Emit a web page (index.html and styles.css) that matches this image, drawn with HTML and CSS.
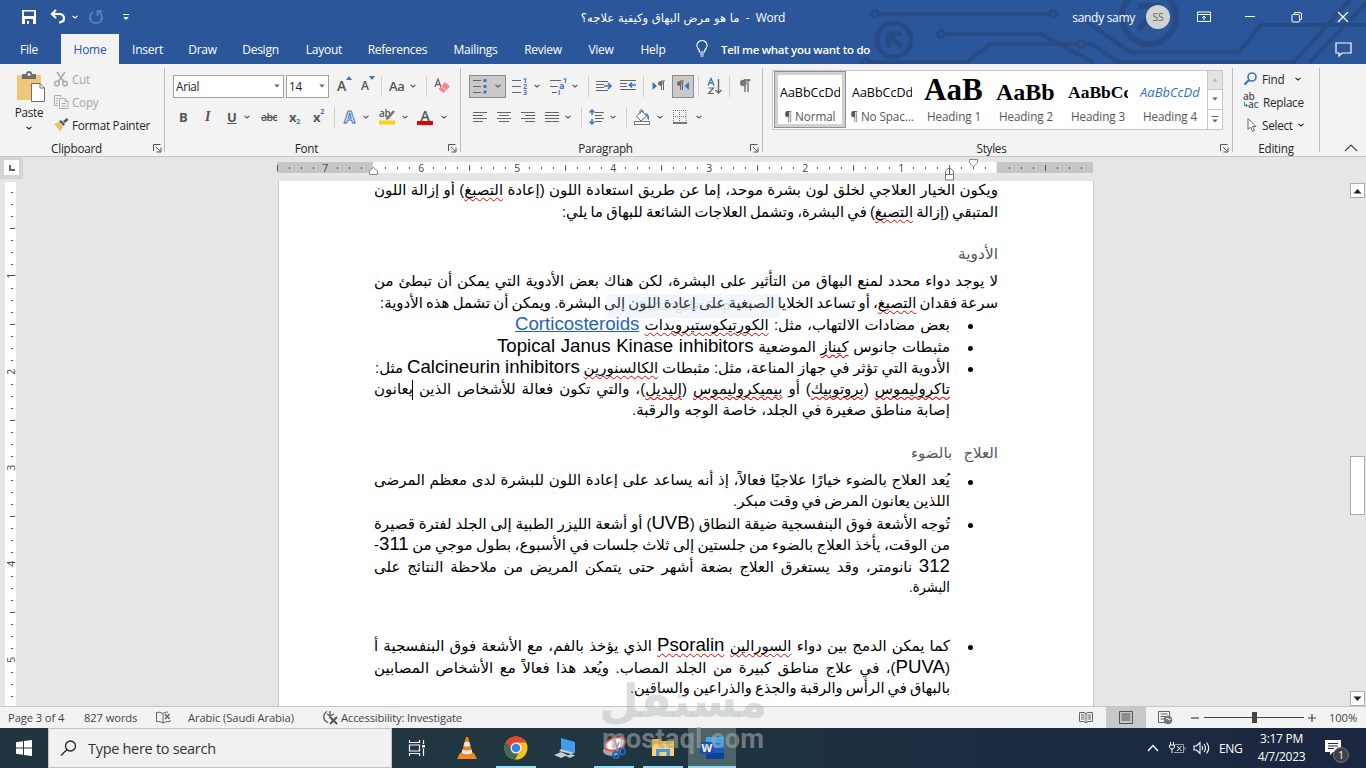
FILE: index.html
```html
<!DOCTYPE html>
<html lang="en">
<head>
    <meta charset="UTF-8">
    <meta name="viewport" content="width=device-width, initial-scale=1.0">
    <title>ما هو مرض البهاق وكيفية علاجه؟ - Word</title>
    <link rel="stylesheet" href="styles.css">
</head>
<body>
    <svg class="defs" width="0" height="0">
        <symbol id="chev" viewBox="0 0 8 8"><path d="M1.5 2.8 L4 5 L6.5 2.8" fill="none" stroke="currentColor" stroke-width="1.1"/></symbol>
        <symbol id="launch" viewBox="0 0 9 9"><path d="M0.5 7 V0.5 H7.5 M3 3 L7 7 M8 3.5 V8 H3.5" fill="none" stroke="#555"/></symbol>
        <symbol id="tri" viewBox="0 0 8 8"><path d="M1.2 2.5 H6.8 L4 5.5 Z" fill="#666"/></symbol>
    </svg>

    <header class="top">
        <svg class="circuit" width="506" height="64" viewBox="860 0 506 64" fill="none" stroke="#274b85" stroke-width="4">
            <circle cx="875" cy="14" r="3.5" stroke-width="3"/>
            <path d="M879 14 H1049"/>
            <circle cx="1053" cy="14" r="3.5" stroke-width="3"/>
            <circle cx="894" cy="40" r="17" stroke-width="5"/>
            <path d="M888 48 V34 H902 M889 35 L901 47" stroke-width="5"/>
            <circle cx="865" cy="62" r="3.5" stroke-width="3"/>
            <path d="M869 62 H968 L990 44 H1077"/>
            <circle cx="1081" cy="44" r="3.5" stroke-width="3"/>
            <path d="M1085 44 H1092 L1118 62 H1294 L1350 0"/>
            <circle cx="941" cy="34" r="3.5" stroke-width="3"/>
            <path d="M945 34 H1041 L1094 63"/>
            <path d="M1084 20 L1130 52 H1239 L1261 25 H1366"/>
            <circle cx="1149" cy="17" r="27" stroke-width="6"/>
            <path d="M1138 29 L1156 11 M1138 6 H1160 V28" stroke-width="6"/>
            <path d="M1309 63 L1366 3"/>
        </svg>
        <div class="titlebar">
            <div class="quick">
                <svg width="16" height="16" viewBox="0 0 16 16"><path d="M1 1 H15 V15 H1 Z M3 2.5 V7 H13 V2.5 Z M4 10 V15 H12 V10 Z" fill="#fff" fill-rule="evenodd"/><path d="M6 12 h2 v3 h-2z" fill="#fff"/></svg>
                <svg width="16" height="16" viewBox="0 0 16 16"><path d="M6 1 L2 5 L6 9 M2 5 H9 Q14 5 14 9.5 Q14 13 9 13.5" fill="none" stroke="#fff" stroke-width="2.2"/></svg>
                <svg class="light" width="8" height="8"><use href="#chev"/></svg>
                <svg width="16" height="16" viewBox="0 0 16 16"><path d="M5 3 A6 6 0 1 0 11 3 M9.5 7 V2 H14" fill="none" stroke="#6286bd" stroke-width="1.7"/></svg>
                <svg width="8" height="8" viewBox="0 0 8 8"><path d="M1 1.5 H7" stroke="#fff"/><path d="M1.2 4 H6.8 L4 7 Z" fill="#fff"/></svg>
            </div>
            <div class="doc-title"><bdi dir="rtl">ما هو مرض البهاق وكيفية علاجه؟</bdi>&nbsp; - &nbsp;Word</div>
            <div class="account">sandy samy <span class="avatar">SS</span></div>
            <div class="window-buttons">
                <svg width="14" height="12" viewBox="0 0 14 12" fill="none" stroke="#fff"><path d="M0.5 1 H13.5 V10.5 H0.5 Z M0.5 3.5 H13.5 M7 9.5 V5 M5 7 L7 5 L9 7"/></svg>
                <svg width="10" height="12" viewBox="0 0 10 12" stroke="#fff"><path d="M0 5.5 H10"/></svg>
                <svg width="12" height="12" viewBox="0 0 12 12" fill="none" stroke="#fff"><rect x="1" y="3.5" width="7.5" height="7.5" rx="1"/><path d="M3.5 3 V1.5 H9 Q10.5 1.5 10.5 3 V8.5 H9"/></svg>
                <svg width="12" height="12" viewBox="0 0 12 12" stroke="#fff" stroke-width="1.2"><path d="M1 1 L11 11 M11 1 L1 11"/></svg>
            </div>
        </div>
        <nav class="tabs">
            <a class="tab file">File</a>
            <a class="tab active">Home</a>
            <a class="tab insert">Insert</a>
            <a class="tab draw">Draw</a>
            <a class="tab design">Design</a>
            <a class="tab layout">Layout</a>
            <a class="tab references">References</a>
            <a class="tab mailings">Mailings</a>
            <a class="tab review">Review</a>
            <a class="tab view">View</a>
            <a class="tab help">Help</a>
            <svg class="bulb" width="14" height="18" viewBox="0 0 14 18" fill="none" stroke="#fff" stroke-width="1.2"><path d="M4.5 12 Q4.5 10 3 8.5 A5 5 0 1 1 11 8.5 Q9.5 10 9.5 12 Z M5 14 H9 M5.5 16 H8.5"/></svg>
            <span class="tell">Tell me what you want to do</span>
            <svg class="comment" width="17" height="15" viewBox="0 0 17 15" fill="none" stroke="#fff" stroke-width="1.2"><path d="M1 1 H16 V11 H7 L4 14 V11 H1 Z"/></svg>
        </nav>
    </header>

    <section class="ribbon">
        <div class="group clipboard">
            <div class="group-body">
                <div class="paste">
                    <svg width="30" height="32" viewBox="0 0 30 32"><rect x="1" y="4" width="24" height="25" fill="#efc778"/><path d="M6 3 H10 A3 3 0 0 1 16 3 H20 V8 H6 Z" fill="#6d6d70"/><circle cx="13" cy="3.5" r="1.5" fill="#f3f3f3"/><path d="M15.5 12.5 H24 L28.5 17 V30.5 H15.5 Z" fill="#fff" stroke="#6f6f6f"/><path d="M24 12.5 V17 H28.5" fill="none" stroke="#6f6f6f"/></svg>
                    <span>Paste</span>
                    <svg width="8" height="8"><use href="#chev"/></svg>
                </div>
                <div class="stack">
                    <div class="cmd off"><svg width="16" height="16" viewBox="0 0 16 16" fill="none" stroke="#a9a9a9" stroke-width="1.5"><path d="M4 1 L11 11 M12 1 L5 11"/><circle cx="4" cy="12.5" r="2.3"/><circle cx="12" cy="12.5" r="2.3"/></svg>Cut</div>
                    <div class="cmd off"><svg width="16" height="16" viewBox="0 0 16 16" fill="none" stroke="#adadad"><path d="M5 11.5 H1.5 V1.5 H8 V3 M3 4.5 H5 M3 7 H5 M3 9.5 H5"/><path d="M6.5 4.5 H12 L15 7.5 V14.5 H6.5 Z M12 4.5 V7.5 H15 M8.5 9.5 H13 M8.5 12 H13"/></svg>Copy</div>
                    <div class="cmd"><svg width="16" height="16" viewBox="0 0 16 16"><path d="M1 7 L6 5 L10 9.5 L7.5 14.5 Z" fill="#efc06c"/><path d="M6 4.5 L8 3 L12 7 L10.5 9 Z M10 4 L14 1 L15.5 3 L12 6 Z" fill="#5b5b5b"/></svg>Format Painter</div>
                </div>
            </div>
            <div class="group-label">Clipboard<svg width="9" height="9"><use href="#launch"/></svg></div>
        </div>

        <div class="group font">
            <div class="tools row1">
                <div class="select">Arial<svg width="8" height="8"><use href="#tri"/></svg></div>
                <div class="select">14<svg width="8" height="8"><use href="#tri"/></svg></div>
                <span class="glyph grow">A<svg width="6" height="4"><path d="M0 4 L3 0 L6 4Z" fill="#3b75bf"/></svg></span>
                <span class="glyph shrink">A<svg width="6" height="4"><path d="M0 0 H6 L3 4Z" fill="#3b75bf"/></svg></span>
                <i class="sep"></i>
                <span class="glyph case">Aa</span>
                <svg width="8" height="8"><use href="#chev"/></svg>
                <i class="sep"></i>
                <svg width="17" height="17" viewBox="0 0 17 17"><path d="M1 9 L4 1 L7 9 M2 6.5 H6" fill="none" stroke="#666" stroke-width="1.3"/><path d="M4.5 11 L11 4 L16 8.500 L9.500 15 Z" fill="#f2888d"/><path d="M7 8.5 L12 12.5" stroke="#f9d0d2"/></svg>
            </div>
            <div class="tools row2">
                <b class="glyph">B</b>
                <span class="glyph italic">I</span>
                <u class="glyph">U</u>
                <svg width="8" height="8"><use href="#chev"/></svg>
                <s class="glyph strike">abc</s>
                <span class="glyph bold">x<sub>2</sub></span>
                <span class="glyph bold">x<sup>2</sup></span>
                <i class="sep"></i>
                <span class="glyph outline">A</span>
                <svg width="8" height="8"><use href="#chev"/></svg>
                <svg width="17" height="16" viewBox="0 0 17 16"><text x="0" y="8" class="ab">ab</text><path d="M15 2 L9 9 L7 10" stroke="#777" stroke-width="2.5"/><rect x="0" y="11.5" width="16" height="4" fill="#fcd116"/></svg>
                <svg width="8" height="8"><use href="#chev"/></svg>
                <span class="glyph color">A</span>
                <svg width="8" height="8"><use href="#chev"/></svg>
            </div>
            <div class="group-label">Font<svg width="9" height="9"><use href="#launch"/></svg></div>
        </div>

        <div class="group paragraph">
            <div class="tools row1">
                <div class="pressed">
                    <svg width="16" height="16" viewBox="0 0 16 16"><path d="M0 2.5 H8 M0 8.5 H8 M0 14.5 H8" stroke="#666"/><g fill="#3b75bf"><circle cx="12" cy="2.5" r="1.7"/><circle cx="12" cy="8.5" r="1.7"/><circle cx="12" cy="14" r="1.7"/></g></svg>
                    <svg width="8" height="8"><use href="#chev"/></svg>
                </div>
                <svg width="16" height="17" viewBox="0 0 16 17"><path d="M0 2.5 H9 M0 8.5 H9 M0 14.5 H9" stroke="#666"/><g class="num"><text x="11" y="5">1</text><text x="11" y="11">2</text><text x="11" y="17">3</text></g></svg>
                <svg width="8" height="8"><use href="#chev"/></svg>
                <svg width="17" height="17" viewBox="0 0 17 17"><path d="M0 2.5 H11 M0 8.5 H8 M2 14.5 H7" stroke="#666"/><g class="num"><text x="13" y="5">1</text><text x="9" y="11" class="big">a</text><text x="8" y="17">i</text></g></svg>
                <svg width="8" height="8"><use href="#chev"/></svg>
                <i class="sep"></i>
                <svg width="16" height="14" viewBox="0 0 16 14"><path d="M0 2.5 H12 M0 5.5 H8 M0 8.5 H8 M0 11.5 H12" stroke="#666"/><path d="M8 7 H15 M12 4 L15 7 L12 10" fill="none" stroke="#3b75bf" stroke-width="1.7"/></svg>
                <svg width="16" height="14" viewBox="0 0 16 14"><path d="M0 1.5 H16 M0 4.5 H7 M0 7.5 H7 M0 10.5 H16" stroke="#666"/><path d="M9 6 H16 M12 3.5 L9.5 6 L12 8.5" fill="none" stroke="#3b75bf" stroke-width="1.7"/></svg>
                <i class="sep"></i>
                <svg width="14" height="12" viewBox="0 0 14 12"><path d="M0.5 2 V10 L5 6 Z" fill="#3b75bf"/><path d="M9 1 H13 M9.5 1 V10 M11.5 1 V10" stroke="#666"/><circle cx="8.3" cy="3.5" r="2.3" fill="#666"/></svg>
                <div class="pressed rtl-btn">
                    <svg width="14" height="12" viewBox="0 0 14 12"><path d="M13 2 V10 L8.5 6 Z" fill="#3b75bf"/><path d="M4 1 H8 M4.5 1 V10 M6.5 1 V10" stroke="#666"/><circle cx="3.3" cy="3.5" r="2.3" fill="#666"/></svg>
                </div>
                <i class="sep"></i>
                <svg width="16" height="17" viewBox="0 0 16 17"><path d="M1 7.5 L4 0.5 L7 7.5 M2 5 H6" fill="none" stroke="#3b75bf" stroke-width="1.3"/><path d="M1.5 10 H6.5 L1.5 15.5 H7" fill="none" stroke="#666" stroke-width="1.2"/><path d="M11.5 1 V15 M8.5 12 L11.5 15 L14.5 12" fill="none" stroke="#666" stroke-width="1.4"/></svg>
                <i class="sep"></i>
                <svg width="12" height="14" viewBox="0 0 12 14"><path d="M5 1 H11.5 M6 1 V13 M9 1 V13" stroke="#666" stroke-width="1.3"/><circle cx="4.3" cy="4" r="3.3" fill="#777"/></svg>
            </div>
            <div class="tools row2">
                <svg width="14" height="12" viewBox="0 0 14 12"><path d="M0 1.5 H14 M0 4.5 H10 M0 7.5 H14 M0 10.5 H10" stroke="#666"/></svg>
                <svg width="14" height="12" viewBox="0 0 14 12"><path d="M0 1.5 H14 M2 4.5 H12 M0 7.5 H14 M2 10.5 H12" stroke="#666"/></svg>
                <svg width="14" height="12" viewBox="0 0 14 12"><path d="M0 1.5 H14 M4 4.5 H14 M0 7.5 H14 M4 10.5 H14" stroke="#666"/></svg>
                <svg width="14" height="12" viewBox="0 0 14 12"><path d="M0 1.5 H14 M0 4.5 H14 M0 7.5 H14 M0 10.5 H14" stroke="#666"/></svg>
                <svg width="8" height="8"><use href="#chev"/></svg>
                <i class="sep"></i>
                <svg width="15" height="16" viewBox="0 0 15 16"><path d="M3 1 V6 M3 10 V15 M0.5 3.5 L3 1 L5.5 3.5 M0.5 12.5 L3 15 L5.5 12.5" fill="none" stroke="#3b75bf" stroke-width="1.5"/><path d="M6 3.5 H15 M6 6.5 H13 M6 9.5 H15 M6 12.5 H13" stroke="#666"/></svg>
                <svg width="8" height="8"><use href="#chev"/></svg>
                <i class="sep"></i>
                <svg width="17" height="17" viewBox="0 0 17 17"><path d="M2.5 7 L8 2 L12.5 7 L7 12 Z M6 5 V1.5 Q7.5 0 9 1.5 V4" fill="#fff" stroke="#666"/><path d="M11 4 Q16 5 15 11 Q13 10 13 7 Z" fill="#3b75bf"/><path d="M0.5 12.5 H15.5 V15.5 H0.5 Z" fill="#fff" stroke="#777"/></svg>
                <svg width="8" height="8"><use href="#chev"/></svg>
                <svg width="14" height="14" viewBox="0 0 14 14"><path d="M0 0.5 H14 M0 6.5 H14 M0.5 0 V13 M6.5 0 V13 M13 0 V13" stroke="#777" stroke-dasharray="1 1"/><path d="M0 13 H14" stroke="#444" stroke-width="1.4"/></svg>
                <svg width="8" height="8"><use href="#chev"/></svg>
            </div>
            <div class="group-label">Paragraph<svg width="9" height="9"><use href="#launch"/></svg></div>
        </div>

        <div class="group styles">
            <div class="gallery">
                <div class="style selected"><span class="sample">AaBbCcDd</span><span>¶ Normal</span></div>
                <div class="style"><span class="sample">AaBbCcDd</span><span>¶ No Spac...</span></div>
                <div class="style"><span class="sample h1">AaB</span><span>Heading 1</span></div>
                <div class="style"><span class="sample h2">AaBb</span><span>Heading 2</span></div>
                <div class="style"><span class="sample h3">AaBbCc</span><span>Heading 3</span></div>
                <div class="style"><span class="sample h4">AaBbCcDd</span><span>Heading 4</span></div>
                <div class="scroller">
                    <div class="dim"><svg width="8" height="8"><path d="M1.5 5.5 H6.5 L4 2.5 Z" fill="#b5b5b5"/></svg></div>
                    <div><svg width="8" height="8"><use href="#tri"/></svg></div>
                    <div><svg width="8" height="9"><path d="M0.5 1.5 H7.5" stroke="#666"/><path d="M1.2 4.5 H6.8 L4 7.5 Z" fill="#666"/></svg></div>
                </div>
            </div>
            <div class="group-label">Styles<svg width="9" height="9"><use href="#launch"/></svg></div>
        </div>

        <div class="group editing">
            <div class="stack">
                <div class="cmd"><svg width="16" height="16" viewBox="0 0 16 16" fill="none" stroke="#3b75bf"><circle cx="9" cy="6" r="4" stroke-width="1.6"/><path d="M6 9 L1.5 13.5" stroke-width="2.3"/></svg>Find<svg class="tail far" width="8" height="8"><use href="#chev"/></svg></div>
                <div class="cmd"><svg width="17" height="17" viewBox="0 0 17 17"><text x="0" y="7" class="ab">ab</text><text x="5" y="15" class="ab">a<tspan fill="#3b75bf">c</tspan></text><path d="M1.5 9 V12.5 H4 M3 11 L4.5 12.5 L3 14" fill="none" stroke="#3b75bf"/></svg>Replace</div>
                <div class="cmd"><svg width="16" height="16" viewBox="0 0 16 16"><path d="M5 1.5 V12.5 L7.5 10 L9.5 14.5 L11.5 13.5 L9.5 9.5 H13 Z" fill="#fff" stroke="#666"/></svg>Select<svg class="tail" width="8" height="8"><use href="#chev"/></svg></div>
            </div>
            <div class="group-label">Editing</div>
        </div>
        <svg class="collapse" width="14" height="8" viewBox="0 0 14 8"><path d="M1 7 L7 1 L13 7" fill="none" stroke="#444" stroke-width="1.2"/></svg>
    </section>

    <main class="workspace">
        <div class="left-edge">
            <div class="tab-stop"><i></i></div>
            <svg class="vruler" id="vruler" width="11" height="524" viewBox="0 0 11 524"></svg>
        </div>
        <div class="canvas">
            <div class="hruler">
                <svg id="hruler" width="816" height="11" viewBox="0 0 816 11"></svg>
                <svg class="marker left-indent" width="9" height="8"><path d="M0.5 7.5 V4 L4.5 0.5 L8.5 4 V7.5 Z" fill="#fff" stroke="#888"/></svg>
                <svg class="marker hanging" width="9" height="14"><path d="M0.5 7.5 V4 L4.5 0.5 L8.5 4 V7.5 Z M0.5 7.5 H8.5 V13 H0.5 Z" fill="#fff" stroke="#777"/><path d="M4.5 1 V7" stroke="#555"/></svg>
                <svg class="marker first-line" width="9" height="8"><path d="M0.5 0.5 V4 L4.5 7.5 L8.5 4 V0.5 Z" fill="#fff" stroke="#888"/></svg>
            </div>
            <article class="page" dir="rtl" lang="ar">
                <p class="line" data-width="624">ويكون الخيار العلاجي لخلق لون بشرة موحد، إما عن طريق استعادة اللون (إعادة <em>التصبغ</em>) أو إزالة اللون</p>
                <p class="line" data-width="436">المتبقي (إزالة <em>التصبغ</em>) في البشرة، وتشمل العلاجات الشائعة للبهاق ما يلي:</p>
                <h2 class="line" data-width="40">الأدوية</h2>
                <p class="line" data-width="624">لا يوجد دواء محدد لمنع البهاق من التأثير على البشرة، لكن هناك بعض الأدوية التي يمكن أن تبطئ من</p>
                <p class="line" data-width="618">سرعة فقدان <em>التصبغ</em>، أو تساعد الخلايا الصبغية على إعادة اللون إلى البشرة. ويمكن أن تشمل هذه الأدوية:</p>
                <p class="line item" data-width="435">بعض مضادات الالتهاب، مثل: <em>الكورتيكوستيرويدات</em> <a class="en">Corticosteroids</a></p>
                <p class="line item" data-width="453">مثبطات جانوس <em>كيناز</em> الموضعية <span class="en">Topical Janus Kinase inhibitors</span></p>
                <p class="line item" data-width="575">الأدوية التي تؤثر في جهاز المناعة، مثل: مثبطات <em>الكالسنورين</em> <span class="en">Calcineurin inhibitors</span> مثل:</p>
                <p class="line cont" data-width="576"><em>تاكروليموس</em> (<em>بروتوبيك</em>) أو <em>بيميكروليموس</em> (<em>إليديل</em>)، والتي تكون فعالة للأشخاص الذين <i class="caret"></i>يعانون</p>
                <p class="line cont" data-width="318">إصابة مناطق صغيرة في الجلد، خاصة الوجه والرقبة.</p>
                <h2 class="line" data-width="87">العلاج بالضوء</h2>
                <p class="line item" data-width="576">يُعد العلاج بالضوء خيارًا علاجيًا فعالاً، إذ أنه يساعد على إعادة اللون للبشرة لدى معظم المرضى</p>
                <p class="line cont" data-width="217">اللذين يعانون المرض في وقت مبكر.</p>
                <p class="line item" data-width="576">تُوجه الأشعة فوق البنفسجية ضيقة النطاق (<span class="en">UVB</span>) أو أشعة الليزر الطبية إلى الجلد لفترة قصيرة</p>
                <p class="line cont" data-width="576">من الوقت، يأخذ العلاج بالضوء من جلستين إلى ثلاث جلسات في الأسبوع، بطول موجي من <span class="en">311</span>-</p>
                <p class="line cont" data-width="576"><span class="en">312</span> نانومتر، وقد يستغرق العلاج بضعة أشهر حتى يتمكن المريض من ملاحظة النتائج على</p>
                <p class="line cont" data-width="41">البشرة.</p>
                <p class="line item gap" data-width="576">كما يمكن الدمج بين دواء <em>السورالين</em> <em class="en">Psoralin</em> الذي يؤخذ بالفم، مع الأشعة فوق البنفسجية أ</p>
                <p class="line cont" data-width="576">(<span class="en">PUVA</span>)، في علاج مناطق كبيرة من الجلد المصاب. ويُعد هذا فعالاً مع الأشخاص المصابين</p>
                <p class="line cont" data-width="320">بالبهاق في الرأس والرقبة والجذع والذراعين والساقين.</p>
                <div class="snip">Rectangular Snip</div>
            </article>
        </div>
        <div class="scrollbar">
            <div class="sb-btn"><svg width="9" height="6"><path d="M0.5 5.5 H8.5 L4.5 1 Z" fill="#222"/></svg></div>
            <div class="thumb"></div>
            <div class="sb-btn"><svg width="9" height="6"><path d="M0.5 0.5 H8.5 L4.5 5 Z" fill="#222"/></svg></div>
        </div>
    </main>

    <section class="statusbar">
        <span>Page 3 of 4</span>
        <span>827 words</span>
        <svg width="15" height="13" viewBox="0 0 15 13" fill="none" stroke="#666"><path d="M7 2.5 V12 M7 2.5 Q4 0.5 0.5 1.5 V10.5 Q4 10 7 12 Q9 10.5 14 10.5 V9 M7 2.5 Q9 1 12 1"/><path d="M9 3 L13.5 8 M13.5 3 L9 8" stroke-width="1.5"/></svg>
        <span>Arabic (Saudi Arabia)</span>
        <svg width="17" height="15" viewBox="0 0 17 15" fill="none" stroke="#555"><path d="M8 1 V5 M5 4 L8 6 L12 4 M8 6 V8 M5 1.5 A6 6 0 0 0 6 12.5" stroke-width="1.3"/><path d="M8 7 L15 14 M15 7 L8 14" stroke-width="2"/></svg>
        <span class="access">Accessibility: Investigate</span>
        <svg class="read" width="14" height="13" viewBox="0 0 14 13" fill="none" stroke="#666"><path d="M0.5 1.5 H5 L7 2.5 L9 1.5 H13.5 V10.5 H9 L7 12 L5 10.5 H0.5 Z M7 2.5 V12 M2 4 H5.5 M2 6 H5.5 M2 8 H5.5 M8.5 4 H12 M8.5 6 H12 M8.5 8 H12"/></svg>
        <div class="print"><svg width="14" height="13" viewBox="0 0 14 13" fill="none" stroke="#555"><path d="M0.5 0.5 H13.5 V12.5 H0.5 Z M2.5 3 H11.5 M2.5 5 H11.5 M2.5 7 H11.5 M2.5 9 H11.5"/></svg></div>
        <svg width="15" height="14" viewBox="0 0 15 14" fill="none" stroke="#666"><path d="M7 11.5 H0.5 V0.5 H11.5 V5 M2.5 3 H9.5 M2.5 5.5 H8 M2.5 8 H6"/><circle cx="10" cy="9" r="3.8" fill="#777"/><path d="M8 8 L10 7 L11 9 L13 8" stroke="#eee"/></svg>
        <svg width="10" height="10"><path d="M1 5 H9" stroke="#444" stroke-width="1.2"/></svg>
        <div class="zoom-track"><i></i></div>
        <svg width="10" height="10"><path d="M1 5 H9 M5 1 V9" stroke="#444" stroke-width="1.2"/></svg>
        <span>100%</span>
    </section>

    <footer class="taskbar">
        <div class="start"><svg width="16" height="16" viewBox="0 0 16 16" fill="#fff"><path d="M0 2.3 L7 1.3 V7.5 H0 Z M8 1.1 L16 0 V7.5 H8 Z M0 8.5 H7 V14.7 L0 13.7 Z M8 8.5 H16 V16 L8 14.9 Z"/></svg></div>
        <div class="search"><svg width="17" height="17" viewBox="0 0 17 17" fill="none" stroke="#222" stroke-width="1.3"><circle cx="10.5" cy="6" r="5"/><path d="M7 9.5 L1 15.5"/></svg>Type here to search</div>
        <div class="apps">
            <div class="app"><svg width="18" height="16" viewBox="0 0 18 16" fill="none" stroke="#fff" stroke-width="1.2"><path d="M1.500 0 V2.500 H11.500 V0 M1.500 5 H11.500 V11 H1.500 Z M1.500 16 V13.500 H11.500 V16 M15.500 0 V4 M15.500 8.500 V16"/><path d="M14 5 H17 V7.500 H14 Z" fill="#fff" stroke="none"/></svg></div>
            <div class="app"><svg width="20" height="24" viewBox="0 0 20 24"><path d="M3 17 H17 L20 23 H0 Z" fill="#f08a1d"/><path d="M9 1 H11 L16 19 Q10 22 4 19 Z" fill="#f0801a"/><path d="M7.7 6 H12.3 L13.5 10 Q10 11.5 6.5 10 Z M5.5 13.5 Q10 15.5 14.5 13.5 L15.5 17 Q10 19.5 4.5 17 Z" fill="#e9e9e9"/></svg></div>
            <div class="app open"><svg width="24" height="24" viewBox="0 0 24 24"><circle cx="12" cy="12" r="11.5" fill="#fbc116"/><path d="M12 12 L2 6.3 A11.5 11.5 0 0 0 11 23.5 L16 15 Z" fill="#47675a"/><path d="M2 6.3 A11.5 11.5 0 0 1 22 6.5 H12 L7 12 Z" fill="#e2452f"/><circle cx="12" cy="12" r="5.5" fill="#fff"/><circle cx="12" cy="12" r="4.3" fill="#3a82e2"/></svg></div>
            <div class="app"><svg width="24" height="24" viewBox="0 0 24 24"><path d="M8 2 L22 6 V17 L8 13 Z" fill="#429cea"/><path d="M8 13 L22 17 L18 18 L6 15 Z" fill="#bdd5e6"/><path d="M1 19 L8 16 L15 19 L8 22 Z M13 20 L18 18 L22 19.5 L17 22 Z" fill="#c8ccce"/></svg></div>
            <div class="app open"><svg width="25" height="24" viewBox="0 0 25 24"><ellipse cx="10" cy="15" rx="9" ry="5" fill="#a6a8aa"/><ellipse cx="13" cy="8" rx="10.5" ry="6" transform="rotate(-18 13 8)" fill="#f4f4f4" stroke="#dc5242" stroke-width="1.8"/><path d="M13 4 L15 13 M17 6 L14 14" stroke="#999" stroke-width="1.5"/><circle cx="14" cy="19" r="3" fill="none" stroke="#1c66bd" stroke-width="2"/><circle cx="20" cy="15.5" r="3" fill="none" stroke="#1c66bd" stroke-width="2"/></svg></div>
            <div class="app open"><svg width="22" height="20" viewBox="0 0 22 20"><path d="M0 1 H8 L10 3 H22 V18 H0 Z" fill="#eeb33b"/><path d="M0 6 H22 V18 H0 Z" fill="#fbd368"/><path d="M4 18 V11 H18 V18 H14.5 V14 H7.5 V18 Z" fill="#3f9ae0"/></svg></div>
            <div class="app open current"><svg width="25" height="22" viewBox="0 0 25 22"><rect x="6" width="18" height="6" fill="#41a5ee"/><rect x="6" y="6" width="18" height="5" fill="#2b7cd3"/><rect x="6" y="11" width="18" height="5" fill="#185abd"/><rect x="6" y="16" width="18" height="6" fill="#103f91"/><rect y="5" width="13" height="12" fill="#174fae"/><text x="1.5" y="15" class="w">W</text></svg></div>
        </div>
        <div class="tray">
            <svg width="12" height="8" viewBox="0 0 12 8"><path d="M1 7 L6 1.5 L11 7" fill="none" stroke="#fff" stroke-width="1.4"/></svg>
            <svg width="17" height="14" viewBox="0 0 17 14" fill="none" stroke="#fff"><path d="M1.5 1 V4 M4.5 1 V4 M0.5 4 H5.5 V6 Q5 8 3 8 Q1 8 0.5 6 Z M3 8 V12 M8 5 L12.500 10 M12.500 5 L8 10"/><path d="M6 3.5 H14.5 V11.5 H5 M16 6 V9" stroke="#9aa3ab"/></svg>
            <svg width="17" height="14" viewBox="0 0 17 14" fill="none" stroke="#fff" stroke-width="1.1"><path d="M1 5 H3.5 L7 1.5 V12.5 L3.5 9 H1 Z M9 5 Q10.5 7 9 9 M11 3 Q14 7 11 11 M13.5 1.5 Q18 7 13.5 12.5"/></svg>
            <span>ENG</span>
            <div class="clock">3:17 PM<br>4/7/2023</div>
            <div class="notify"><svg width="17" height="16" viewBox="0 0 17 16"><path d="M0 0 H16 V12 H8 L5 15 V12 H0 Z" fill="#fff"/><path d="M3 3.5 H13 M3 6 H13 M3 8.5 H9" stroke="#1c2a41"/></svg><span class="badge">1</span></div>
        </div>
    </footer>

    <div class="watermark"><span class="wm-ar">مستقل</span><span class="wm-en">mostaql.com</span></div>

    <script>
        document.querySelectorAll('.line').forEach(line => {
            const range = document.createRange();
            range.selectNodeContents(line);
            const natural = range.getBoundingClientRect().width;
            const gaps = (line.textContent.match(/ /g) || []).length;
            if (gaps > 0) {
                line.style.wordSpacing = Math.max(-1, (line.dataset.width - natural) / gaps) + 'px';
            }
            const spaced = range.getBoundingClientRect().width;
            line.style.transform = `scaleX(${line.dataset.width / spaced})`;
        });

        // horizontal ruler: one inch is 96px, counted from the right margin
        let h = '<rect width="96" height="11" fill="#c6c6c6"/><rect x="96" width="623" height="11" fill="#fff"/><rect x="720" width="96" height="11" fill="#c6c6c6"/>';
        for (let i = -7; i <= 60; i++) {
            const x = 720 - i * 12;
            if (i === 0 || x === 96) continue;
            if (i % 8 === 0) {
                h += `<text x="${x}" y="9.5" class="tick-num">${i / 8}</text>`;
            } else if (i % 4 === 0) {
                h += `<rect x="${x}" y="3" width="1" height="6" fill="#555"/>`;
            } else {
                h += `<rect x="${x}" y="5" width="1" height="2" fill="#555"/>`;
            }
        }
        document.getElementById('hruler').innerHTML = h;

        // vertical ruler
        let v = '';
        for (let i = 1; i <= 43; i++) {
            const y = i * 12 - 2;
            if (i % 8 === 0) {
                v += `<text transform="translate(10 ${y}) rotate(-90)" class="tick-num">${i / 8}</text>`;
            } else if (i % 8 === 4) {
                v += `<rect x="5" y="${y}" width="5" height="1" fill="#555"/>`;
            } else {
                v += `<rect x="6" y="${y}" width="2" height="1" fill="#555"/>`;
            }
        }
        document.getElementById('vruler').innerHTML = v;
    </script>
</body>
</html>
```
FILE: styles.css
```css
:root {
    --blue: #2b579a;
    --ribbon: #f3f3f3;
    --line: #c6c6c6;
    --icon: #555;
}

* {
    box-sizing: border-box;
    margin: 0;
    padding: 0;
}

body {
    width: 1366px;
    height: 768px;
    overflow: hidden;
    display: flex;
    flex-direction: column;
    font-family: "Open Sans", "DejaVu Sans", sans-serif;
    font-size: 12px;
    letter-spacing: -0.3px;
    color: #262626;
    background: #e6e6e6;
    position: relative;
}

svg {
    display: block;
    flex: none;
    overflow: visible;
}

.defs {
    position: absolute;
}

/* title bar and tabs */
.top {
    height: 64px;
    flex: none;
    background: var(--blue);
    color: #fff;
    position: relative;
}

.circuit {
    position: absolute;
    right: 0;
    top: 0;
    overflow: hidden;
}

.titlebar {
    height: 34px;
    display: grid;
    grid-template-columns: 480px 406px 284px 196px;
    align-items: center;
    position: relative;
}

.quick {
    display: grid;
    grid-template-columns: 29px 21px 17px 34px 10px;
    align-items: center;
    padding-left: 21px;
}

.light {
    color: #fff;
}

.doc-title {
    text-align: center;
    padding-top: 1px;
}

.doc-title bdi {
    font-family: "DejaVu Sans", sans-serif;
    font-size: 11.6px;
    letter-spacing: 0;
}

.account {
    display: flex;
    align-items: center;
    justify-content: flex-end;
    gap: 11px;
    height: 31px;
}

.avatar {
    width: 24px;
    height: 24px;
    border-radius: 50%;
    background: #d2d2d2;
    color: #666;
    font-size: 10.5px;
    line-height: 24px;
    text-align: center;
}

.window-buttons {
    display: grid;
    grid-template-columns: repeat(4, 46.3px);
    justify-items: center;
    align-items: center;
    height: 31px;
    padding-left: 11px;
}

.tabs {
    display: flex;
    align-items: center;
    height: 30px;
    position: relative;
}

.tab {
    line-height: 31px;
    text-align: center;
    height: 30px;
    letter-spacing: -0.25px;
}

.tab.file {
    width: 61px;
    padding-right: 3px;
}

.tab.active {
    width: 58px;
    background: var(--ribbon);
    color: var(--blue);
}

.tab.insert { width: 57px; }
.tab.draw { width: 53px; }
.tab.design { width: 63px; }
.tab.layout { width: 64px; }
.tab.references { width: 83px; }
.tab.mailings { width: 73px; }
.tab.review { width: 62px; }
.tab.view { width: 54px; }
.tab.help { width: 50px; }

.bulb {
    margin-left: 17px;
}

.tell {
    margin-left: 12px;
    font-weight: 600;
    font-size: 11.5px;
}

.comment {
    margin-left: auto;
    margin-right: 14px;
}

/* ribbon */
.ribbon {
    height: 93px;
    flex: none;
    display: flex;
    background: var(--ribbon);
    border-bottom: 1px solid var(--line);
    font-size: 11.7px;
    letter-spacing: -0.25px;
    padding: 4px 0;
    color: #262626;
}

.group {
    height: 84px;
    border-right: 1px solid #bdbdbd;
    display: flex;
    flex-direction: column;
    flex: none;
}

.clipboard { width: 165px; }
.font { width: 296px; }
.paragraph { width: 302px; }
.styles { width: 470px; }
.editing { width: 87px; }

.group-label {
    height: 16px;
    margin-top: auto;
    margin-bottom: -4px;
    line-height: 16px;
    display: grid;
    grid-template-columns: 1fr 9px;
    align-items: center;
    text-align: center;
    padding: 0 2px 0 0;
}

.font .group-label,
.paragraph .group-label,
.styles .group-label {
    padding-right: 3px;
}

.editing .group-label {
    grid-template-columns: 1fr;
    padding: 0;
}

.group-body {
    display: flex;
}

.paste {
    width: 50px;
    padding: 3px 0 0 8px;
    display: flex;
    flex-direction: column;
    align-items: center;
}

.paste span {
    margin-top: 1px;
}

.paste svg:first-child {
    margin-left: 4px;
}

.paste svg:last-child {
    margin-top: 4px;
}

.stack {
    display: flex;
    flex-direction: column;
    padding-left: 3px;
    margin-top: -1px;
}

.editing .stack {
    padding-left: 10px;
}

.cmd {
    height: 23px;
    display: flex;
    align-items: center;
    gap: 3px;
}

.off {
    color: #a6a6a6;
}

.tail {
    margin-left: 1px;
}

.tail.far {
    margin-left: 7px;
}

.tools {
    display: grid;
    align-items: center;
    color: var(--icon);
}

.row1 {
    height: 24px;
    margin-top: 6px;
}

.row2 {
    height: 24px;
    margin-top: 7px;
}

.sep {
    width: 1px;
    height: 21px;
    background: #cfcfcf;
}

.font .row1 {
    padding-left: 8px;
    grid-template-columns: 113px 51px 24px 20px 8px 20px 17px 8px 18px;
}

.font .row2 {
    padding-left: 14px;
    grid-template-columns: 24px 24px 16px 18px 28px 24px 21px 10px 18px 17px 22px 16px 23px 8px;
}

.paragraph .row1 {
    padding-left: 8px;
    grid-template-columns: 43px 21px 17px 21px 17px 8px 24px 23px 9px 20px 26px 9px 22px 10px 12px;
}

.paragraph .row2 {
    padding-left: 12px;
    grid-template-columns: 24px 24px 24px 19px 17px 8px 20px 17px 8px 22px 17px 22px 8px;
}

.select {
    height: 23px;
    width: 111px;
    border: 1px solid #a0a0a0;
    background: #fff;
    color: #222;
    display: flex;
    align-items: center;
    justify-content: space-between;
    padding: 0 2px;
}

.select + .select {
    width: 43px;
}

.glyph {
    font-size: 14px;
    line-height: 20px;
    display: flex;
}

.grow {
    font-size: 14px;
    font-weight: 600;
}

.shrink {
    font-size: 12px;
    font-weight: 600;
}

.case {
    font-size: 13px;
    font-weight: 600;
}

b.glyph, u.glyph, .bold {
    font-weight: 700;
    font-size: 13px;
}

u.glyph {
    text-decoration: underline;
    display: block;
}

.italic {
    font-family: "Liberation Serif", serif;
    font-style: italic;
    font-weight: 700;
    padding-left: 2px;
}

.strike {
    display: block;
    font-size: 10.5px;
    font-weight: 600;
    letter-spacing: -0.6px;
}

.bold sub, .bold sup {
    font-size: 7px;
    color: #3b75bf;
    line-height: 10px;
}

.bold sub {
    align-self: flex-end;
}

.outline {
    font-weight: 700;
    font-size: 16px;
    color: #f3f3f3;
    -webkit-text-stroke: 1px #3b75bf;
}

.color {
    font-weight: 600;
    width: 16px;
    height: 16px;
    line-height: 13px;
    justify-content: center;
    border-bottom: 4px solid #e80000;
}

.ab {
    font: 600 10px "Open Sans", sans-serif;
    fill: #555;
}

.num {
    font: 700 7px "Open Sans", sans-serif;
    fill: #3b75bf;
}

.big {
    font-size: 9px;
}

.pressed {
    width: 37px;
    height: 23px;
    border: 1px solid #8a8a8a;
    background: #c9c9c9;
    display: flex;
    align-items: center;
    gap: 5px;
    padding-left: 3px;
}

.rtl-btn {
    width: 22px;
}

.gallery {
    margin: 2px 0 0 9px;
    width: 451px;
    height: 60px;
    border: 1px solid var(--line);
    background: #fff;
    display: flex;
    padding-left: 1px;
}

.style {
    width: 72px;
    height: 57px;
    margin-top: 1px;
    padding: 0 6px;
    display: flex;
    flex-direction: column;
    align-items: center;
    color: #555;
    white-space: nowrap;
    letter-spacing: -0.1px;
}

.style.selected {
    border: 1px solid #909090;
    box-shadow: inset 0 0 0 3px #d0d0d0;
    padding: 0 5px;
    margin-top: 0;
    height: 57px;
}

.sample {
    width: 60px;
    height: 36px;
    line-height: 41px;
    overflow: hidden;
    color: #000;
    font-size: 12.5px;
    letter-spacing: 0;
}

.sample.h1, .sample.h2, .sample.h3 {
    font-family: "Liberation Serif", serif;
    font-weight: 700;
}

.sample.h1 {
    font-size: 31px;
    line-height: 35px;
}

.sample.h2 {
    font-size: 24px;
    line-height: 40px;
}

.sample.h3 {
    font-size: 17.5px;
    line-height: 40px;
}

.sample.h4 {
    font-style: italic;
    font-size: 13px;
    color: #2e74b5;
}

.scroller {
    margin-left: auto;
    width: 15px;
    display: grid;
    grid-template-rows: 1fr 1fr 1fr;
    border-left: 1px solid var(--line);
}

.scroller div {
    display: flex;
    align-items: center;
    justify-content: center;
    border-bottom: 1px solid var(--line);
}

.scroller div:last-child {
    border-bottom: 0;
}

.dim {
    background: #e3e3e3;
}

.collapse {
    margin: 76px 0 0 24px;
}

/* document area */
.workspace {
    height: 549px;
    flex: none;
    display: flex;
}

.left-edge {
    width: 277px;
    flex: none;
}

.tab-stop {
    width: 23px;
    height: 22px;
    background: #d4d4d4;
    padding: 3px 4px;
}

.tab-stop i {
    display: block;
    width: 15px;
    height: 15px;
    border: 4px solid #fff;
    background: linear-gradient(#666, #666) 1px 1px / 2px 6px no-repeat, linear-gradient(#666, #666) 1px 5px / 6px 2px no-repeat #fff;
}

.vruler {
    margin: 3px 0 0 5px;
    background: #fff;
    overflow: hidden;
}

.tick-num {
    font: 10.5px "Open Sans", sans-serif;
    fill: #444;
    text-anchor: middle;
}

.canvas {
    width: 818px;
    flex: none;
    padding-top: 5px;
}

.hruler {
    height: 19px;
    position: relative;
}

.marker {
    position: absolute;
}

.left-indent {
    left: 92px;
    top: 5px;
}

.hanging {
    left: 668px;
    top: 5px;
}

.first-line {
    left: 692px;
    top: -3px;
}

.page {
    height: 525px;
    width: 816px;
    margin-left: 1px;
    background: #fff;
    border: solid var(--line);
    border-width: 0 1px;
    overflow: hidden;
    padding-right: 95px;
    position: relative;
    font-family: "Liberation Sans", "DejaVu Sans", sans-serif;
    font-size: 15px;
    letter-spacing: 0;
    color: #000;
}

.line {
    height: 21.5px;
    line-height: 21.5px;
    font-weight: 400;
    white-space: nowrap;
    transform-origin: right center;
}

.line:first-child {
    margin-top: -2px;
}

h2.line {
    margin: 21px 0 5.5px;
    font-size: 15px;
    color: #555;
}

.line.item, .line.cont {
    margin-right: 48px;
    position: relative;
}

.line.item::before {
    content: "";
    position: absolute;
    right: -23px;
    top: 11px;
    width: 5px;
    height: 5px;
    border-radius: 50%;
    background: #000;
}

.line.gap {
    margin-top: 36.5px;
}

.en {
    font-size: 18.67px;
}

a.en {
    color: #1e62c0;
    text-decoration: underline;
    text-decoration-thickness: 1px;
}

.line em {
    font-style: normal;
    text-decoration: underline wavy #e60000 1px;
    text-decoration-skip-ink: none;
    text-underline-offset: 2px;
}

.caret {
    display: inline-block;
    width: 1px;
    height: 20px;
    margin-left: -1px;
    vertical-align: middle;
    background: #000;
}

.snip {
    position: absolute;
    left: 328px;
    top: 113px;
    width: 173px;
    height: 24px;
    padding-left: 32px;
    direction: ltr;
    font: 12px/24px "Open Sans", sans-serif;
    letter-spacing: -0.2px;
    color: rgba(120, 120, 120, 0.25);
    background: rgba(190, 220, 245, 0.22);
}

.scrollbar {
    width: 16px;
    height: 523px;
    margin: 26px 0 0 auto;
    display: flex;
    flex-direction: column;
    justify-content: space-between;
}

.sb-btn, .thumb {
    width: 15px;
    height: 15px;
    background: #fff;
    border: 1px solid #ababab;
    display: flex;
    align-items: center;
    justify-content: center;
}

.thumb {
    height: 59px;
    margin-top: 82px;
}

/* status bar */
.statusbar {
    height: 22px;
    flex: none;
    background: #f2f2f2;
    border-top: 1px solid var(--line);
    display: grid;
    grid-template-columns: 76px 72px 32px 134px 19px 738px 27px 52px 32px 14px 103px 22px 40px;
    align-items: center;
    padding-left: 8px;
    font-size: 11.2px;
    letter-spacing: -0.1px;
    color: #444;
}

.access {
    letter-spacing: -0.15px;
}

.print {
    width: 40px;
    height: 21px;
    background: #c8c8c8;
    display: flex;
    align-items: center;
    justify-content: center;
}

.zoom-track {
    width: 100px;
    height: 1px;
    background: #444;
    display: flex;
    align-items: center;
    justify-content: center;
}

.zoom-track i {
    width: 5px;
    height: 11px;
    flex: none;
    background: #444;
}

/* taskbar */
.taskbar {
    height: 40px;
    flex: none;
    display: flex;
    background: linear-gradient(90deg, #20353f, #203640 45%, #1b2a41 75%, #1b2740);
    color: #fff;
}

.start {
    width: 48px;
    display: flex;
    align-items: center;
    justify-content: center;
}

.search {
    width: 344px;
    background: #f1f1f1;
    border: 1px solid #c4c4c4;
    display: flex;
    align-items: center;
    gap: 11px;
    padding-left: 11px;
    font-size: 14.5px;
    color: #333;
}

.apps {
    display: flex;
    gap: 9px;
    padding-left: 8px;
}

.app {
    width: 40px;
    height: 40px;
    display: flex;
    align-items: center;
    justify-content: center;
    border-top: 2px solid transparent;
    border-bottom: 2px solid transparent;
}

.open {
    border-bottom-color: #8ce0f2;
}

.app:first-child {
    width: 34px;
    margin-right: 4px;
}

.current {
    width: 48px;
    margin-left: -4px;
    background: #4c6466;
    border-top: 0;
    padding-top: 2px;
}

.w {
    font: 700 11px "Open Sans", sans-serif;
    fill: #fff;
}

.tray {
    margin-left: auto;
    display: grid;
    grid-template-columns: 22px 24px 26px 26px 73px 48px;
    align-items: center;
    width: 219px;
}

.clock {
    text-align: center;
    line-height: 18px;
}

.notify {
    margin-left: 7px;
    width: 31px;
    height: 16px;
    position: relative;
}

.badge {
    position: absolute;
    left: 8px;
    top: 7px;
    width: 16px;
    height: 16px;
    border-radius: 50%;
    background: #3d4147;
    border: 1px solid #777;
    font-size: 10px;
    line-height: 14px;
    text-align: center;
}

.watermark {
    position: absolute;
    left: 600px;
    top: 675px;
    width: 166px;
    height: 80px;
    color: rgba(170, 176, 176, 0.42);
    display: flex;
    flex-direction: column;
    align-items: center;
    letter-spacing: 0;
}

.wm-ar {
    font: 700 46px/52px "DejaVu Sans", sans-serif;
}

.wm-en {
    font: 700 27.5px/24px Roboto, sans-serif;
    color: rgba(165, 165, 165, 0.6);
}
```
